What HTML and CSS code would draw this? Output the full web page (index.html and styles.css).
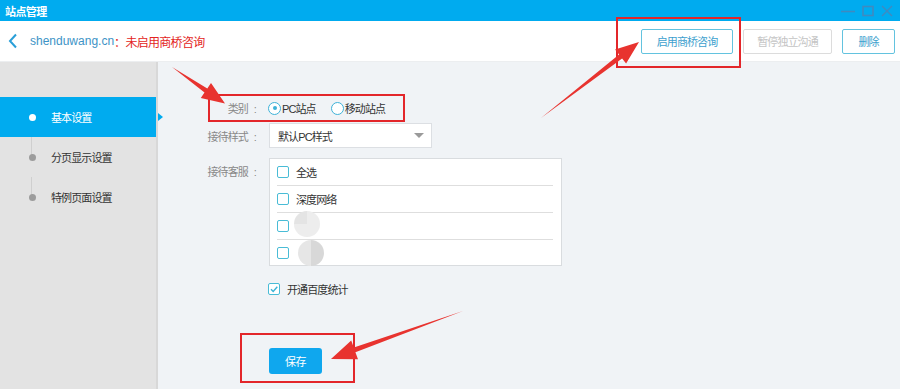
FILE: index.html
```html
<!DOCTYPE html>
<html lang="zh-CN">
<head>
<meta charset="utf-8">
<title>站点管理</title>
<link rel="stylesheet" href="styles.css">
</head>
<body>
<div class="app">
  <div class="titlebar">
    <span class="title">站点管理</span>
    <div class="winctl">
      <svg width="14" height="12" viewBox="0 0 14 12"><path d="M0 6.5H14" stroke="#3f8ac0" stroke-width="1.6"/></svg>
      <svg width="12" height="12" viewBox="0 0 12 12"><rect x="1" y="1.5" width="10" height="9" fill="none" stroke="#3f8ac0" stroke-width="1.6"/></svg>
      <svg width="12" height="12" viewBox="0 0 12 12"><path d="M1 1L11 11M11 1L1 11" stroke="#3f8ac0" stroke-width="1.4"/></svg>
    </div>
  </div>

  <div class="header">
    <div class="crumb">
      <svg class="back" width="10" height="16" viewBox="0 0 10 16"><path d="M8 1.5L2 8l6 6.5" fill="none" stroke="#2a9fd8" stroke-width="2"/></svg>
      <span class="site">shenduwang.cn</span><span class="status">：未启用商桥咨询</span>
    </div>
    <div class="actions">
      <button class="btn btn-enable">启用商桥咨询</button>
      <button class="btn btn-disabled">暂停独立沟通</button>
      <button class="btn btn-delete">删除</button>
    </div>
  </div>

  <div class="content">
    <aside class="sidebar">
      <ul class="nav">
        <li class="nav-item active"><span class="dot"></span>基本设置</li>
        <li class="nav-item"><span class="dot"></span>分页显示设置</li>
        <li class="nav-item"><span class="dot"></span>特例页面设置</li>
      </ul>
    </aside>

    <main class="main">
      <div class="row row-type">
        <span class="label">类别<span class="colon">:</span></span>
        <div class="radios">
          <span class="radio checked"><span class="radio-circle"></span>PC站点</span>
          <span class="radio"><span class="radio-circle"></span>移动站点</span>
        </div>
      </div>

      <div class="row row-style">
        <span class="label">接待样式<span class="colon">:</span></span>
        <div class="select"><span>默认PC样式</span><span class="caret"></span></div>
      </div>

      <div class="row row-agents">
        <span class="label label-top">接待客服<span class="colon">:</span></span>
        <div class="agent-list">
          <div class="agent"><span class="check"></span>全选</div>
          <div class="agent"><span class="check"></span>深度网络</div>
          <div class="agent"><span class="check"></span><span class="blob blob-a"></span></div>
          <div class="agent"><span class="check"></span><span class="blob blob-b"></span></div>
        </div>
      </div>

      <div class="row row-stat">
        <span class="check checked"><svg width="10" height="10" viewBox="0 0 10 10"><path d="M2 5.2l2.2 2.2L8.3 2.8" fill="none" stroke="#3bb3d6" stroke-width="1.4"/></svg></span>
        <span class="stat-text">开通百度统计</span>
      </div>

      <div class="row row-save">
        <button class="btn-save">保存</button>
      </div>
    </main>
  </div>

  <svg class="annotations" width="900" height="389" viewBox="0 0 900 389">
    <g fill="none" stroke="#e3262a" stroke-width="2">
      <rect x="617" y="18" width="123" height="49"/>
      <rect x="209" y="95" width="195" height="26"/>
      <rect x="241" y="334" width="113" height="48"/>
    </g>
    <g fill="#e8332f">
      <polygon points="172,67 207.3,88.4 211,83.1 225,103.5 200.8,97.9 204.5,92.6"/>
      <polygon points="541,118 619.1,54.5 615.1,49.4 639,42 626.1,63.6 622.1,58.5"/>
      <polygon points="463,311 353.8,347.6 351.2,340.5 331,359 358,359.3 355.4,352.3"/>
    </g>
  </svg>
</div>
</body>
</html>
```

FILE: styles.css
```css
* { box-sizing: border-box; }

html, body {
  margin: 0;
  padding: 0;
}

body {
  width: 900px;
  height: 389px;
  overflow: hidden;
  font-family: "Liberation Sans", "Noto Sans CJK SC", sans-serif;
  font-size: 11px;
  color: #333;
  background: #f0f3f6;
}

.app {
  position: relative;
  width: 900px;
  height: 389px;
  display: flex;
  flex-direction: column;
}

/* title bar */
.titlebar {
  height: 21px;
  background: #00abef;
  display: flex;
  align-items: center;
  justify-content: space-between;
  padding: 0 7px 0 5px;
}

.title {
  color: #fff;
  font-weight: bold;
  font-size: 11px;
  letter-spacing: -0.6px;
}

.winctl {
  display: flex;
  align-items: center;
  gap: 7px;
}

/* header */
.header {
  height: 41px;
  background: #fff;
  border-bottom: 1px solid #eceef0;
  display: flex;
  align-items: center;
  justify-content: space-between;
  padding: 0 5px 0 8px;
}

.crumb {
  display: flex;
  align-items: center;
  font-size: 12px;
}

.back {
  margin-right: 12px;
}

.site {
  color: #3d93c6;
}

.status {
  color: #e32422;
  letter-spacing: -0.7px;
}

.actions {
  display: flex;
  gap: 10px;
}

.btn {
  height: 25px;
  background: #fff;
  border: 1px solid #63c3df;
  border-radius: 2px;
  color: #3d9fce;
  font-family: inherit;
  font-size: 11px;
  letter-spacing: -0.9px;
  padding: 0;
}

.btn-enable { width: 92px; }
.btn-disabled { width: 89px; border-color: #dcdcdc; color: #c4c4c4; }
.btn-delete { width: 53px; }

/* content */
.content {
  flex: 1;
  display: flex;
}

.sidebar {
  width: 158px;
  background: #e3e3e3;
  border-right: 2px solid #d8d8d8;
  padding-top: 35px;
}

.nav {
  list-style: none;
  margin: 0;
  padding: 0;
}

.nav-item {
  position: relative;
  height: 40px;
  display: flex;
  align-items: center;
  padding-left: 29px;
  color: #333;
  letter-spacing: -0.9px;
}

.nav-item + .nav-item::before {
  content: "";
  position: absolute;
  left: 31px;
  top: 0;
  width: 1px;
  height: 20px;
  background: #cfcfcf;
}

.dot {
  position: relative;
  width: 7px;
  height: 7px;
  border-radius: 50%;
  background: #9c9c9c;
  margin-right: 15px;
}

.nav-item.active {
  background: #00abef;
  color: #fff;
}

.nav-item.active .dot {
  background: #fff;
}

.nav-item.active::after {
  content: "";
  position: absolute;
  right: -7px;
  top: 16px;
  border-left: 5px solid #00abef;
  border-top: 4px solid transparent;
  border-bottom: 4px solid transparent;
}

/* main form */
.main {
  flex: 1;
  padding-top: 38px;
  display: flex;
  flex-direction: column;
}

.row {
  display: flex;
  align-items: center;
}

.label {
  width: 100px;
  text-align: right;
  color: #888;
  margin-right: 10px;
  letter-spacing: -0.9px;
}

.colon {
  margin-left: 6px;
  margin-right: 2px;
}

.row-type { height: 16px; }

.radios {
  display: flex;
  align-items: center;
  gap: 15px;
}

.radio {
  display: flex;
  align-items: center;
  letter-spacing: -0.9px;
  color: #333;
}

.radio-circle {
  position: relative;
  width: 13px;
  height: 13px;
  border: 1px solid #3db2d8;
  border-radius: 50%;
  margin-right: 1px;
  background: #fff;
}

.radio.checked .radio-circle::after {
  content: "";
  position: absolute;
  left: 3.5px;
  top: 3.5px;
  width: 4px;
  height: 4px;
  border-radius: 50%;
  background: #3db2d8;
}

.row-style {
  margin-top: 7px;
}

.row-style .label { margin-right: 11px; }

.select {
  width: 163px;
  height: 25px;
  background: #fff;
  border: 1px solid #dcdfe3;
  display: flex;
  align-items: center;
  justify-content: space-between;
  padding: 0 7px 0 8px;
  letter-spacing: -0.9px;
}

.caret {
  border-top: 5px solid #9a9a9a;
  border-left: 5px solid transparent;
  border-right: 5px solid transparent;
}

.row-agents {
  margin-top: 10px;
  align-items: flex-start;
}

.label-top {
  line-height: 28px;
  margin-right: 11px;
}

.agent-list {
  width: 293px;
  background: #fff;
  border: 1px solid #d9dcdf;
  padding: 0 8px 0 7px;
}

.agent {
  height: 27px;
  display: flex;
  align-items: center;
  border-bottom: 1px solid #dedede;
  letter-spacing: -0.9px;
}

.agent:last-child {
  border-bottom: none;
  height: 25px;
}

.check {
  width: 12px;
  height: 12px;
  border: 1px solid #49bcd6;
  border-radius: 2px;
  margin-right: 7px;
  background: #fff;
  display: inline-flex;
  align-items: center;
  justify-content: center;
}

.blob {
  width: 26px;
  height: 26px;
  border-radius: 50%;
  margin-left: -2px;
}

.blob-a {
  margin-top: -5px;
  background:
    linear-gradient(90deg, #e4e4e4 0 50%, transparent 50%) top / 100% 50% no-repeat,
    #ededed;
}

.blob-b {
  margin-left: 2px;
  background: linear-gradient(90deg, #e6e6e6 0 50%, #d8d8d8 50%);
}

.row-stat {
  margin-top: 15px;
  padding-left: 268px;
  margin-left: -158px;
}

.row-stat .check {
  width: 12px;
  height: 12px;
}

.stat-text {
  letter-spacing: -0.9px;
}

.row-save {
  margin-top: 51px;
  padding-left: 111px;
}

.btn-save {
  width: 53px;
  height: 26px;
  border: none;
  border-radius: 3px;
  background: #0fa7ee;
  color: #fff;
  font-family: inherit;
  font-size: 11px;
  letter-spacing: -0.5px;
  padding: 0;
}

.annotations {
  position: absolute;
  left: 0;
  top: 0;
  pointer-events: none;
}
```
